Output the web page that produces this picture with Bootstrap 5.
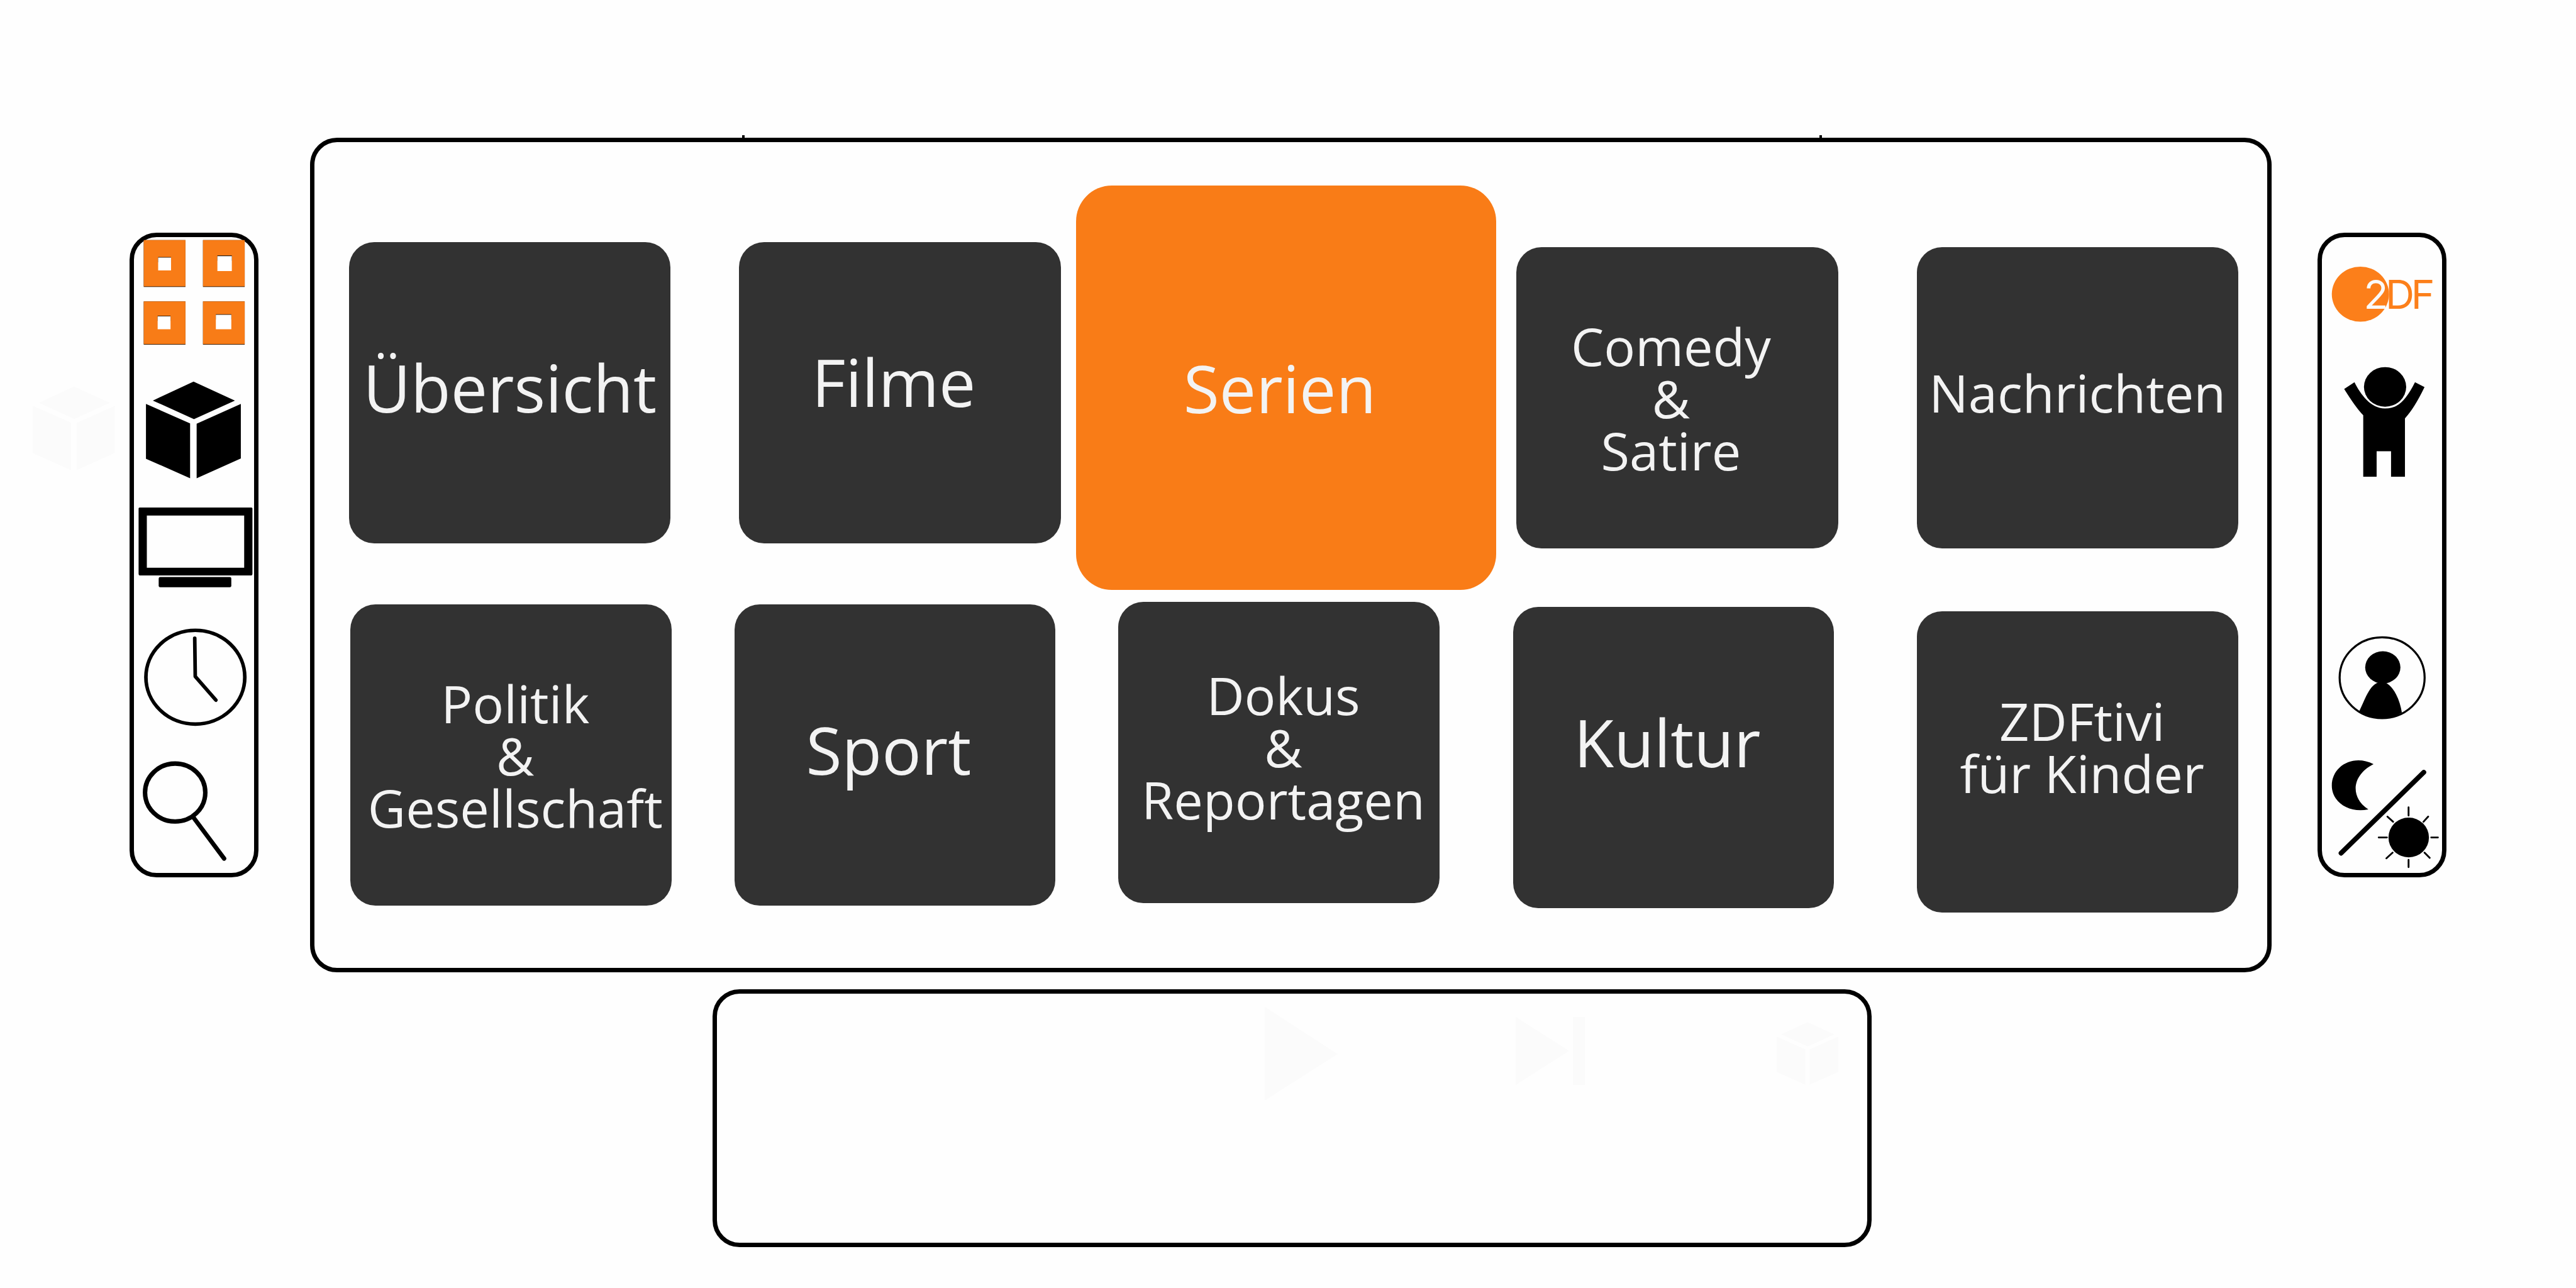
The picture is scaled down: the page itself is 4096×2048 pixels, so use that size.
<!DOCTYPE html>
<html lang="de">
<head>
<meta charset="utf-8">
<meta name="viewport" content="width=device-width, initial-scale=1">
<title>ZDF Mediathek – Kategorien</title>
<link href="https://cdn.jsdelivr.net/npm/bootstrap@5.3.0/dist/css/bootstrap.min.css" rel="stylesheet">
<style>
  :root { --zdf-orange: #f97c17; --tile-dark: #323232; --tile-ink: #f3f3f3; --ghost: #fbfbfb; }
  body { background: #fefefe; font-family: "Open Sans", "Noto Sans", sans-serif; }
  .screen { padding: 219px 206px 65px; }
  .frame { border: 7px solid #000; border-radius: 43px; }
  .rail { flex: 0 0 205px; min-height: 1025px; margin-top: 151px; }
  .stage { flex: 1 1 0; min-width: 0; margin: 0 73px 0 82px; }
  .rail-btn { display: block; width: 100%; padding: 0; border: 0; background: none; color: #000; }
  .rail-btn svg, .ghost { display: block; width: 100%; height: auto; overflow: visible; }
  .logo-type { font-family: Inter, sans-serif; font-size: 78px; font-weight: 400; }

  .board { min-height: 1327px; padding: 69px 46px 88px 55px; }
  .board::before, .board::after { content: ""; position: absolute; top: -11px; width: 4px; height: 5px; background: #000; }
  .board::before { left: 21.9%; }
  .board::after { right: 22.8%; }

  .tile { flex: 511 1 0; min-width: 0; min-height: 479px; padding: 0; border: 0; border-radius: 40px;
          background: var(--tile-dark); color: var(--tile-ink); font-size: 83px; line-height: 83px; }
  .tile:hover, .tile:focus { background: var(--tile-dark); color: var(--tile-ink); }
  .tile-lg { font-size: 104px; line-height: 104px; }
  .tile.tile-active { flex-grow: 668; min-height: 643px; border-radius: 57px; background: var(--zdf-orange); }
  .tile span { display: block; }
  .lift-1 { padding-bottom: 18px; }
  .lift-2 { padding-bottom: 36px; }
  .lift-3 { padding-bottom: 50px; }
  .lean-start { padding-right: 20px; }
  .lean-end { padding-left: 14px; }

  .row-top { gap: 24px; }
  .row-top .tile { margin-top: 90px; }
  .row-top .tile-active { margin-top: 0; }
  .row-top .tile-late { margin-top: 98px; }
  .wide-after { margin-right: 85px; }
  .row-top .wider-after { margin-right: 101px; }
  .near-after { margin-right: 8px; }
  .row-bottom { gap: 100px; margin-top: 19px; padding-left: 2px; }
  .row-bottom .step-1 { margin-top: 4px; }
  .row-bottom .step-2 { margin-top: 8px; margin-left: 17px; }
  .row-bottom .step-3 { margin-top: 15px; margin-left: 32px; }

  .player { min-height: 410px; margin: 27px 636px 0 640px; padding: 21px 46px 0; }
  .ghost { fill: var(--ghost); }
  .ghost-play { width: 116px; margin-right: 283px; }
  .ghost-next { width: 110px; margin-right: 305px; }
  .ghost-cube { width: 98px; }
  .ghost-edge { position: absolute; left: 52px; top: 614px; width: 131px; }
</style>
</head>
<body>
<svg width="0" height="0" class="position-absolute" aria-hidden="true">
  <symbol id="cube" viewBox="283 740 185 189">
    <path d="M375.7 740.6 456 777.5 376.5 813.7 296.7 777.5ZM283.3 784 369 822V928.5L283.3 890.4ZM467.5 784V890L381.7 928.5V822.5Z"/>
  </symbol>
</svg>

<svg class="ghost ghost-edge" viewBox="283 740 185 189" aria-hidden="true"><use href="#cube" x="283" y="740" width="185" height="189"/></svg>

<div class="screen d-flex align-items-start">

  <nav class="rail frame d-flex flex-column" aria-label="Hauptmenü">
    <button type="button" class="rail-btn" aria-label="Kategorien">
      <svg viewBox="260 460.2 233.2 229.5">
        <path d="M279 466h81v91h-81zM394 466h81v91h-81zM279 585h81v84h-81zM394 585h81v84h-81z"/>
        <path fill="#f87c17" d="M279 466h81v90h-81zM394 466h81v90h-81zM279 585h81v83h-81zM394 585h81v83h-81z"/>
        <path d="M307 499h25v10h-25zM422 496h28v10h-28zM306 613h25v10h-25zM419 610h30v10h-30z"/>
        <path fill="#fff" d="M307 500h25v25h-25zM422 497h28v29h-28zM306 614h25v25h-25zM419 611h30v28h-30z"/>
      </svg>
    </button>
    <button type="button" class="rail-btn" aria-label="3D-Ansicht">
      <svg viewBox="260 689.7 233.2 269.8">
        <path d="M375.7 740.6 456 777.5 376.5 813.7 296.7 777.5ZM283.3 784 369 822V928.5L283.3 890.4ZM467.5 784V890L381.7 928.5V822.5Z"/>
      </svg>
    </button>
    <button type="button" class="rail-btn" aria-label="Live-TV">
      <svg viewBox="260 959.5 233.2 200.2">
        <path fill-rule="evenodd" d="M271 985h217q2 0 2 2v127q0 3-2 3H271q-2 0-2-3V987q0-2 2-2ZM285 1000.6V1102H474V1000.6Z"/>
        <rect x="308" y="1120" width="141" height="20" rx="3"/>
      </svg>
    </button>
    <button type="button" class="rail-btn" aria-label="Verlauf">
      <svg viewBox="260 1159.7 233.2 269.8" fill="none" stroke="#000" stroke-linecap="round" stroke-linejoin="round">
        <ellipse cx="379.2" cy="1314.5" rx="96" ry="91" stroke-width="7"/>
        <path d="M378 1239 379 1313 419 1359" stroke-width="7"/>
      </svg>
    </button>
    <button type="button" class="rail-btn" aria-label="Suche">
      <svg viewBox="260 1429.4 233.2 264.9" fill="none" stroke="#000" stroke-linecap="round">
        <ellipse cx="340" cy="1538.3" rx="58.5" ry="56.3" stroke-width="8.7"/>
        <path d="M375 1586 435 1666.5" stroke-width="8.5"/>
      </svg>
    </button>
  </nav>

  <div class="stage d-flex flex-column">
    <main class="board frame position-relative">
      <div class="row-top d-flex align-items-start">
        <button type="button" class="btn tile tile-lg wide-after"><span class="lift-1">Übersicht</span></button>
        <button type="button" class="btn tile tile-lg"><span class="lift-2 lean-start">Filme</span></button>
        <button type="button" class="btn tile tile-lg tile-active near-after" aria-pressed="true"><span class="lean-start">Serien</span></button>
        <button type="button" class="btn tile tile-late wider-after"><span class="lean-start">Comedy<br>&amp;<br>Satire</span></button>
        <button type="button" class="btn tile tile-late"><span class="lift-1">Nachrichten</span></button>
      </div>
      <div class="row-bottom d-flex align-items-start">
        <button type="button" class="btn tile step-1"><span class="lean-end">Politik<br>&amp;<br>Gesellschaft</span></button>
        <button type="button" class="btn tile tile-lg step-1"><span class="lift-1 lean-start">Sport</span></button>
        <button type="button" class="btn tile"><span class="lift-1 lean-end">Dokus<br>&amp;<br>Reportagen</span></button>
        <button type="button" class="btn tile tile-lg step-2"><span class="lift-3 lean-start">Kultur</span></button>
        <button type="button" class="btn tile step-3"><span class="lift-3 lean-end">ZDFtivi<br>für Kinder</span></button>
      </div>
    </main>

    <section class="player frame d-flex justify-content-end align-items-start" aria-label="Player">
      <svg class="ghost ghost-play" viewBox="0 0 116 149" aria-hidden="true"><path d="M0 0 116 75 0 149Z"/></svg>
      <svg class="ghost ghost-next mt-3" viewBox="0 0 110 108" aria-hidden="true"><path d="M0 0 85 54 0 108ZM91 0h19v108H91Z"/></svg>
      <svg class="ghost ghost-cube mt-4" viewBox="283 740 185 189" aria-hidden="true"><use href="#cube" x="283" y="740" width="185" height="189"/></svg>
    </section>
  </div>

  <nav class="rail frame d-flex flex-column" aria-label="Profil und Einstellungen">
    <button type="button" class="rail-btn" aria-label="ZDF">
      <svg viewBox="4506.8 460.2 233.2 200.2">
        <ellipse cx="4581.5" cy="571" rx="55.5" ry="53.5" fill="#fc7f1a"/>
        <g class="logo-type">
          <text x="4588" y="599" fill="#fafafa">2</text>
          <text x="4630" y="599" fill="#fc7f1a">D</text>
          <text x="4680" y="599" fill="#fc7f1a">F</text>
        </g>
      </svg>
    </button>
    <button type="button" class="rail-btn" aria-label="Kinder">
      <svg viewBox="4506.8 660.4 233.2 299.1">
        <ellipse cx="4629.4" cy="751" rx="41" ry="38.5"/>
        <path d="M4550 755 4570 742C4582 766 4602 793 4629 793S4670 776 4687.5 742L4706 751.5Q4686 793 4668 812V925.5H4641V876H4613V925.5H4587V806Q4573 792 4550 755Z"/>
      </svg>
    </button>
    <button type="button" class="rail-btn mt-auto" aria-label="Mein Konto">
      <svg viewBox="4506.8 1159.7 233.2 269.8">
        <ellipse cx="4623.7" cy="1315.5" rx="82.5" ry="78.5" fill="none" stroke="#000" stroke-width="4"/>
        <ellipse cx="4625" cy="1295.5" rx="34.2" ry="31.3"/>
        <path d="M4579 1381C4593 1353 4600 1324 4625 1323C4645 1328 4658 1358 4662 1383Q4620 1407 4579 1381Z"/>
      </svg>
    </button>
    <button type="button" class="rail-btn" aria-label="Hell oder dunkel">
      <svg viewBox="4506.8 1429.4 233.2 264.9">
        <path d="M4607 1483C4567 1463 4526 1487 4526 1525C4526 1556 4558 1579 4597 1571C4563 1550 4562 1506 4607 1483Z"/>
        <ellipse cx="4675.3" cy="1625.5" rx="39.3" ry="38.5"/>
        <g fill="none" stroke="#000" stroke-linecap="round">
          <path d="M4544 1656 4704.5 1499" stroke-width="9.5"/>
          <path d="M4675 1567v16M4675 1669v14M4617 1625.5h16M4719 1625.5h13M4634 1585l11 10M4713 1585l-9 10M4632 1666l12-11M4716 1665l-10-10" stroke-width="3.5"/>
        </g>
      </svg>
    </button>
  </nav>
</div>
<script src="https://cdn.jsdelivr.net/npm/bootstrap@5.3.0/dist/js/bootstrap.bundle.min.js"></script>
</body>
</html>
